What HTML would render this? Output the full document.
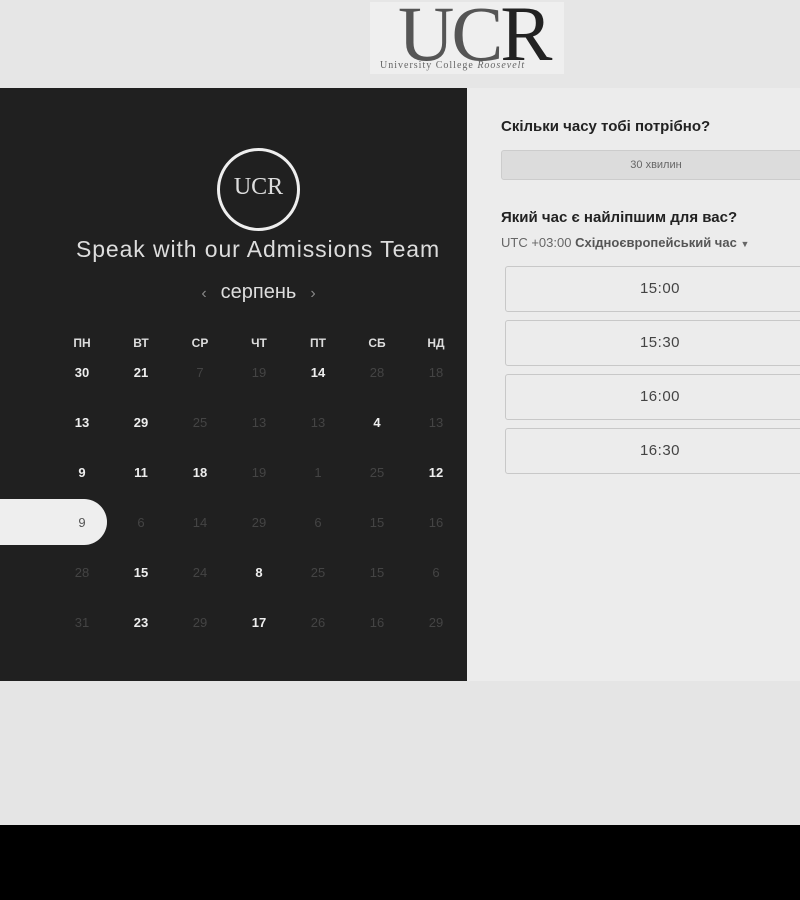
<!DOCTYPE html>
<html><head><meta charset="utf-8"><style>
*{margin:0;padding:0;box-sizing:border-box}
body{width:800px;height:900px;background:#e5e5e5;font-family:"Liberation Sans","DejaVu Sans",sans-serif;position:relative;overflow:hidden}
.top{position:absolute;left:0;top:0;width:800px;height:88px;background:#e6e6e6}
.logo{position:absolute;left:370px;top:2px;width:194px;height:72px;background:#efefef;overflow:hidden}
.logo .u{position:absolute;left:28px;top:-13px;font-family:"Liberation Serif",serif;font-size:78px;color:#555;letter-spacing:-3px}
.logo .u b{font-weight:normal;color:#222}
.logo .s{position:absolute;left:10px;top:58px;font-family:"Liberation Serif",serif;font-size:10px;color:#666;letter-spacing:1px}
.dark{position:absolute;left:0;top:88px;width:467px;height:593px;background:#202020}
.right{position:absolute;left:467px;top:88px;width:333px;height:593px;background:#ececec}
.foot{position:absolute;left:0;top:825px;width:800px;height:75px;background:#000}
.circ{position:absolute;left:217px;top:148px;width:83px;height:83px;border:3px solid #eee;border-radius:50%;color:#ddd;font-family:"Liberation Serif",serif;font-size:24px;text-align:center;line-height:72px}
.title{position:absolute;left:0;width:516px;top:236px;text-align:center;color:#ddd;font-size:23px;letter-spacing:0.9px}
.month{position:absolute;left:0;width:517px;top:281px;text-align:center;color:#ddd;font-size:20px}
.month i{font-style:normal;color:#888;font-size:16px;margin:0 14px}
.c{position:absolute;width:50px;margin-left:-25px;text-align:center;font-size:13px;color:#444}
.h{color:#ddd;font-weight:bold;font-size:12px}
.b{color:#eee;font-weight:bold}
.pill{position:absolute;left:-30px;top:499px;width:137px;height:46px;background:#eee;border-radius:23px}
.lbl{position:absolute;left:501px;font-weight:bold;font-size:15px;color:#222}
.dur{position:absolute;left:501px;top:150px;width:310px;height:30px;background:#dcdcdc;border:1px solid #ccc;border-radius:3px;text-align:center;line-height:28px;font-size:11px;color:#666}
.tz{position:absolute;left:501px;top:235px;font-size:13px;color:#666}
.tz b{color:#555}
.slot{position:absolute;left:505px;width:310px;height:46px;border:1px solid #c8c8c8;border-radius:3px;background:#ececec;text-align:center;line-height:44px;font-size:15px;color:#444;letter-spacing:0.5px}
</style></head><body>
<div class="top"><div class="logo"><div class="u">UC<b>R</b></div><div class="s">University College <i>Roosevelt</i></div></div></div>
<div class="dark"></div>
<div class="right"></div>
<div class="foot"></div>
<div class="circ">UCR</div>
<div class="title">Speak with our Admissions Team</div>
<div class="month"><i>‹</i>серпень<i>›</i></div>
<div class="pill"></div>
<div class="c h" style="left:82px;top:336px">ПН</div><div class="c h" style="left:141px;top:336px">ВТ</div><div class="c h" style="left:200px;top:336px">СР</div><div class="c h" style="left:259px;top:336px">ЧТ</div><div class="c h" style="left:318px;top:336px">ПТ</div><div class="c h" style="left:377px;top:336px">СБ</div><div class="c h" style="left:436px;top:336px">НД</div>
<div class="c b" style="left:82px;top:365px">30</div><div class="c b" style="left:141px;top:365px">21</div><div class="c" style="left:200px;top:365px">7</div><div class="c" style="left:259px;top:365px">19</div><div class="c b" style="left:318px;top:365px">14</div><div class="c" style="left:377px;top:365px">28</div><div class="c" style="left:436px;top:365px">18</div>
<div class="c b" style="left:82px;top:415px">13</div><div class="c b" style="left:141px;top:415px">29</div><div class="c" style="left:200px;top:415px">25</div><div class="c" style="left:259px;top:415px">13</div><div class="c" style="left:318px;top:415px">13</div><div class="c b" style="left:377px;top:415px">4</div><div class="c" style="left:436px;top:415px">13</div>
<div class="c b" style="left:82px;top:465px">9</div><div class="c b" style="left:141px;top:465px">11</div><div class="c b" style="left:200px;top:465px">18</div><div class="c" style="left:259px;top:465px">19</div><div class="c" style="left:318px;top:465px">1</div><div class="c" style="left:377px;top:465px">25</div><div class="c b" style="left:436px;top:465px">12</div>
<div class="c" style="left:82px;top:515px;color:#555">9</div><div class="c" style="left:141px;top:515px">6</div><div class="c" style="left:200px;top:515px">14</div><div class="c" style="left:259px;top:515px">29</div><div class="c" style="left:318px;top:515px">6</div><div class="c" style="left:377px;top:515px">15</div><div class="c" style="left:436px;top:515px">16</div>
<div class="c" style="left:82px;top:565px">28</div><div class="c b" style="left:141px;top:565px">15</div><div class="c" style="left:200px;top:565px">24</div><div class="c b" style="left:259px;top:565px">8</div><div class="c" style="left:318px;top:565px">25</div><div class="c" style="left:377px;top:565px">15</div><div class="c" style="left:436px;top:565px">6</div>
<div class="c" style="left:82px;top:615px">31</div><div class="c b" style="left:141px;top:615px">23</div><div class="c" style="left:200px;top:615px">29</div><div class="c b" style="left:259px;top:615px">17</div><div class="c" style="left:318px;top:615px">26</div><div class="c" style="left:377px;top:615px">16</div><div class="c" style="left:436px;top:615px">29</div>
<div class="lbl" style="top:118px">Скільки часу тобі потрібно?</div>
<div class="dur">30 хвилин</div>
<div class="lbl" style="top:209px">Який час є найліпшим для вас?</div>
<div class="tz">UTC +03:00 <b>Східноєвропейський час</b> <span style="font-size:9px">▼</span></div>
<div class="slot" style="top:266px">15:00</div>
<div class="slot" style="top:320px">15:30</div>
<div class="slot" style="top:374px">16:00</div>
<div class="slot" style="top:428px">16:30</div>
</body></html>
